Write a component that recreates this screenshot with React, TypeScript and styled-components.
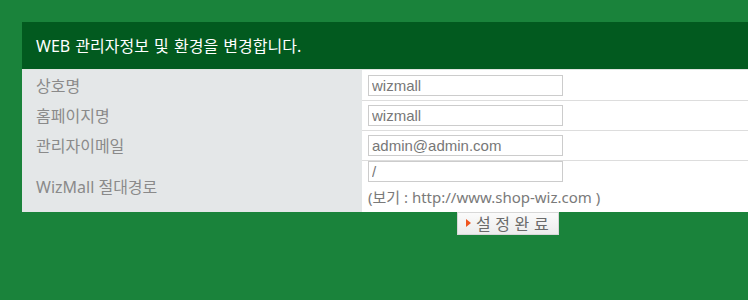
import React from "react";
import styled, { createGlobalStyle } from "styled-components";

const GlobalStyle = createGlobalStyle`
  html, body {
    margin: 0;
    padding: 0;
    background: #1a833b;
    overflow: hidden;
  }
  body {
    font-family: "Noto Sans", "Noto Sans CJK KR", sans-serif;
  }
`;

const Page = styled.div`
  padding: 22px 0 0 22px;
`;

const Panel = styled.div`
  width: 972px;
`;

const Header = styled.div`
  height: 47px;
  background: #025a1f;
  color: #ffffff;
  font-family: "Noto Sans", "Noto Sans CJK KR", sans-serif;
  font-size: 16px;
  word-spacing: 1px;
  display: flex;
  align-items: center;
  padding-left: 14px;
  padding-bottom: 2px;
  box-sizing: border-box;
`;

const Table = styled.div`
  display: grid;
  grid-template-columns: 340px 1fr;
  border-top: 1px solid #dfe5e0;
`;

const Label = styled.div<{ $h: number }>`
  background: #e4e7e8;
  color: #8a8a8a;
  font-family: "Noto Sans", "Noto Sans CJK KR", sans-serif;
  font-size: 16px;
  display: flex;
  align-items: center;
  padding-left: 14px;
  height: ${(p) => p.$h}px;
  box-sizing: border-box;
  padding-bottom: 2px;
`;

const Value = styled.div<{ $h: number; $last?: boolean }>`
  background: #ffffff;
  padding-left: 6px;
  display: flex;
  flex-direction: column;
  justify-content: ${(p) => (p.$last ? "flex-start" : "center")};
  border-bottom: ${(p) => (p.$last ? "none" : "1px solid #dddddd")};
  height: ${(p) => p.$h}px;
  box-sizing: border-box;
`;

const Input = styled.input`
  width: 195px;
  height: 21px;
  box-sizing: border-box;
  border: 1px solid #cccccc;
  padding: 0 3px;
  margin: 0;
  font-family: "Liberation Sans", "Noto Sans CJK KR", sans-serif;
  font-size: 15px;
  color: #777777;
  background: #ffffff;
  outline: none;
`;

const Note = styled.div`
  margin-top: 5px;
  line-height: 20px;
  font-size: 15px;
  color: #7a7a7a;
  font-family: "Noto Sans", "Noto Sans CJK KR", sans-serif;
`;

const ButtonBar = styled.div`
  display: flex;
  padding-left: 435px;
`;

const SubmitButton = styled.button`
  width: 102px;
  height: 23px;
  box-sizing: border-box;
  border: 1px solid #d8d8d8;
  background: linear-gradient(#fbfbfb, #ececec);
  display: flex;
  align-items: center;
  padding: 0 0 1px 8px;
  gap: 5px;
  font-family: "Noto Sans CJK KR", sans-serif;
  font-size: 16px;
  word-spacing: 1px;
  color: #6a6a6a;
  cursor: pointer;
`;

const Arrow = styled.span`
  width: 0;
  height: 0;
  border-top: 4px solid transparent;
  border-bottom: 4px solid transparent;
  border-left: 5px solid #f0541e;
`;

const rows = [
  { label: "상호명", value: "wizmall", h: 31 },
  { label: "홈페이지명", value: "wizmall", h: 30 },
  { label: "관리자이메일", value: "admin@admin.com", h: 30 },
];

export default function App() {
  return (
    <>
      <GlobalStyle />
      <Page>
        <Panel>
          <Header>WEB 관리자정보 및 환경을 변경합니다.</Header>
          <Table>
            {rows.map((r) => (
              <React.Fragment key={r.label}>
                <Label $h={r.h}>{r.label}</Label>
                <Value $h={r.h}>
                  <Input defaultValue={r.value} />
                </Value>
              </React.Fragment>
            ))}
            <Label $h={51}>WizMall 절대경로</Label>
            <Value $h={51} $last>
              <Input defaultValue="/" />
              <Note>(보기 : http://www.shop-wiz.com )</Note>
            </Value>
          </Table>
          <ButtonBar>
            <SubmitButton type="button">
              <Arrow />
              설 정 완 료
            </SubmitButton>
          </ButtonBar>
        </Panel>
      </Page>
    </>
  );
}
